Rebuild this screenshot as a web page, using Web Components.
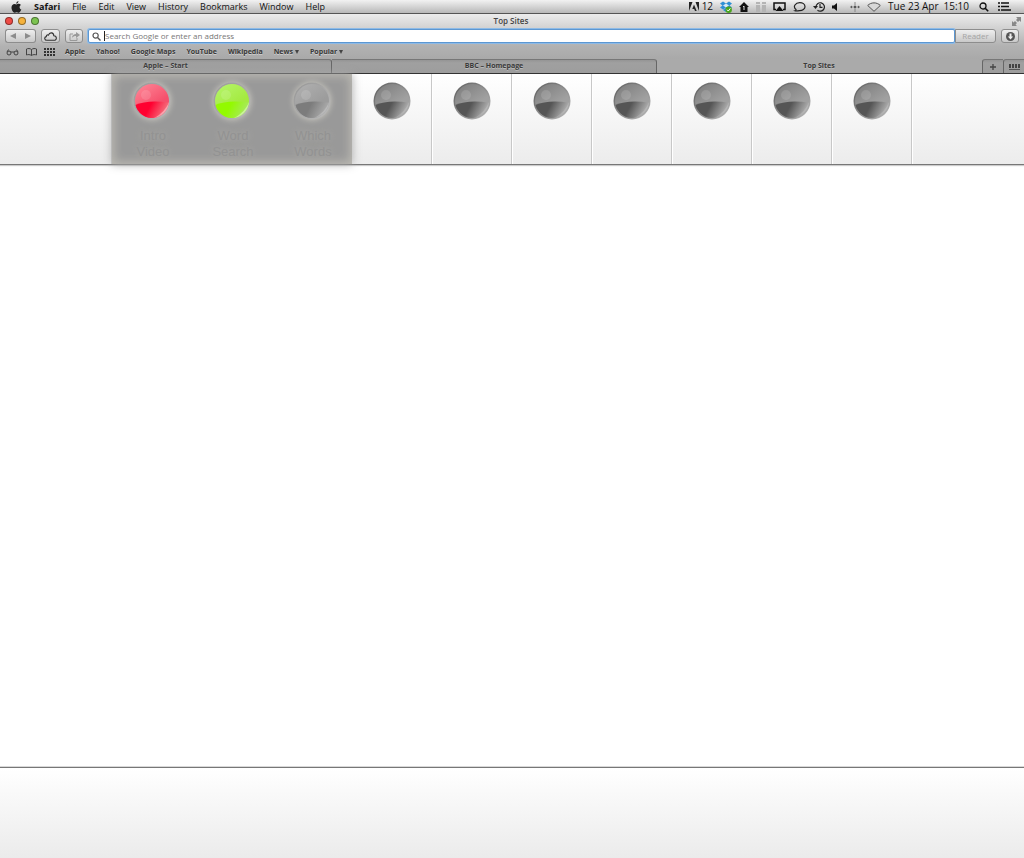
<!DOCTYPE html>
<html lang="en">
<head>
<meta charset="utf-8">
<title>Top Sites</title>
<style>
  html, body { margin: 0; background: #fff; }
  body { font-family: "Open Sans", "Noto Sans", sans-serif; color: #222; }
</style>
</head>
<body>
<browser-desktop></browser-desktop>

<template id="desktop-t">
<style>
  :host { display: flex; flex-direction: column; min-height: 100vh; overflow: hidden; }
  main { flex: 1; }
  footer { height: 90px; border-top: 1px solid #777; box-shadow: 0 -1px 0 #d8d8d8; background: linear-gradient(#fff, #ebebeb); }
</style>
<system-menu></system-menu>
<window-chrome></window-chrome>
<tab-strip></tab-strip>
<step-bar>
  <step-tile tone="red" lit>Intro<br>Video</step-tile>
  <step-tile tone="green" lit>Word<br>Search</step-tile>
  <step-tile tone="gray" lit>Which<br>Words</step-tile>
  <step-tile tone="dark"></step-tile>
  <step-tile tone="dark"></step-tile>
  <step-tile tone="dark"></step-tile>
  <step-tile tone="dark"></step-tile>
  <step-tile tone="dark"></step-tile>
  <step-tile tone="dark"></step-tile>
  <step-tile tone="dark"></step-tile>
</step-bar>
<main></main>
<footer></footer>
</template>

<template id="menu-t">
<style>
  :host { display: flex; justify-content: space-between; align-items: center; height: 13px; box-sizing: content-box; border-bottom: 1px solid #555; background: linear-gradient(#f2f2f2, #b8b8b8); font-size: 9px; line-height: 13px; font-weight: 500; color: #111; white-space: nowrap; }
  nav, div { display: flex; align-items: center; }
  nav { gap: 12px; padding-left: 11px; }
  div { padding-right: 13px; }
  svg { display: block; }
  b { font-weight: 700; }
  .status { gap: 7px; }
  .clock { display: flex; gap: 5px; font-size: 10px; }
  .count { margin-left: -4px; font-size: 10px; }
</style>
<nav>
  <svg width="11" height="12" viewBox="0 0 11 12"><path fill="#222" d="M7.4 0C7.5 1.4 6.5 2.6 5.3 2.7 5.2 1.5 6.2.3 7.4 0zM5.5 3.4c.5 0 1.2-.6 2.2-.6.9 0 1.7.4 2.2 1.1C8 5.100 8.300 7.600 10.300 8.400 9.600 10.200 8.600 11.700 7.600 11.700 6.800 11.700 6.500 11.200 5.600 11.200s-1.200.5-2 .5C2.200 11.700.500 8.900.500 6.500.500 4.100 2 2.900 3.500 2.900c.9 0 1.500.5 2 .5z"/></svg>
  <b>Safari</b><span>File</span><span>Edit</span><span>View</span><span>History</span><span>Bookmarks</span><span>Window</span><span>Help</span>
</nav>
<div class="status">
  <svg width="10" height="9" viewBox="0 0 10 9"><path fill="#222" d="M0 0h3.500L0 9zM6.500 0H10v9zM5 2.500 7.700 9H6L5.200 7H3.300z"/></svg>
  <span class="count">12</span>
  <svg width="12" height="12" viewBox="0 0 12 12"><path fill="#2d8fd5" d="m3 .5 3 2 3-2 3 2-2.500 2L12 6.500 9 8.500 6 6.500 3 8.500 0 6.500l2.500-2L0 2.500zM3 9l3-2 3 2-3 2z"/><path d="m3 4.500 3-2 3 2-3 2z" fill="#d9e9f5"/><circle cx="8.700" cy="8.700" r="3.200" fill="#4aa51d"/><path d="m7 8.700 1.300 1.300 2-2.600" fill="none" stroke="#fff"/></svg>
  <svg width="10" height="10" viewBox="0 0 10 10"><path fill="#111" d="M5 0 10 5H8.500v5h-7V5H0z"/><path d="M5 4v4M4 5l1-1" stroke="#ddd" fill="none"/></svg>
  <svg width="10" height="10" viewBox="0 0 10 10"><g fill="#b4b4b4"><path d="M0 0h4v2H0zM0 3h4v7H0zM6 0h4v2H6zM6 3h4v7H6z"/></g></svg>
  <svg width="13" height="10" viewBox="0 0 13 10"><path d="M3 7.500H1V1h11v6.500h-2" fill="none" stroke="#111" stroke-width="1.500"/><path d="m6.500 4 4 5h-8z" fill="#111"/></svg>
  <svg width="13" height="10" viewBox="0 0 13 10"><path d="M2 8.800C3 8.500 3.200 8 3 7.500 -.5 4.500 2.500.700 6.700.700c3 0 5.300 1.700 5.300 4S9.500 8.800 6.500 8.700C5 8.700 3.500 9.300 2 8.800z" fill="none" stroke="#222" stroke-width="1.200"/></svg>
  <svg width="12" height="10" viewBox="0 0 12 10"><path d="M3 5a4.200 4.200 0 1 1 1.500 3.200M7 2v3.300h2.500" fill="none" stroke="#222" stroke-width="1.200"/><path d="M0 4h5L2.500 7z" fill="#222"/></svg>
  <svg width="11" height="8" viewBox="0 0 11 8"><path d="M0 2.500h2L5 0v8L2 5.500H0z" fill="#111"/></svg>
  <svg width="10" height="10" viewBox="0 0 10 10"><path d="M5 0v10M0 5h10" stroke="#888"/><path d="M2 3.500.5 5 2 6.500zM8 3.500 9.500 5 8 6.500zM4 4h2v2H4z" fill="#555"/></svg>
  <svg width="14" height="10" viewBox="0 0 14 10"><path d="M.7 3.500C4 0 10 0 13.300 3.500L7 9.300z" fill="#d8d8d8" stroke="#555"/></svg>
  <span class="clock"><span>Tue 23 Apr</span><span>15:10</span></span>
  <svg style="margin-left:3px" width="10" height="10" viewBox="0 0 10 10"><circle cx="4" cy="4" r="3" fill="none" stroke="#111" stroke-width="1.300"/><path d="m6.200 6.200 3 3" stroke="#111" stroke-width="1.600"/></svg>
  <svg style="margin-left:2px" width="13" height="9" viewBox="0 0 13 9"><path d="M0 1h2M3 1h8M0 4.500h2M3 4.500h8M0 8h2M3 8h10" stroke="#111" stroke-width="1.700"/></svg>
</div>
</template>

<template id="chrome-t">
<style>
  :host { display: block; background: linear-gradient(#ececec, #d2d2d2 14px, #b2b2b2 32px, #a9a9a9); }
  .title { display: grid; grid-template-columns: 1fr auto 1fr; align-items: center; height: 14px; padding: 0 3px 0 5px; font-size: 8px; line-height: 14px; font-weight: 600; color: #444; }
  .title > span + span { padding-right: 4px; }
  .lights { display: flex; gap: 5px; }
  .lights i { width: 8px; height: 8px; border-radius: 50%; box-sizing: border-box; border: 1px solid #0006; }
  .title svg { justify-self: end; }
  .tools { display: flex; align-items: center; height: 16px; padding: 0 5px; }
  svg { display: block; }
  button { font: inherit; padding: 0; box-sizing: border-box; height: 14px; display: flex; align-items: center; justify-content: center; border: 1px solid #8d8d8d; border-radius: 3px; background: linear-gradient(#eee, #c9c9c9); color: #a4a4a4; font-size: 8px; line-height: 12px; }
  .back { width: 16px; border-radius: 3px 0 0 3px; border-right-color: #bbb; }
  .fwd { width: 16px; margin-left: -1px; border-radius: 0 3px 3px 0; border-left: 0; }
  .cloud { width: 19px; margin-left: 5px; }
  .share { width: 18px; margin-left: 5px; }
  label { flex: 1; min-width: 0; display: flex; align-items: center; gap: 3px; height: 12px; margin-left: 5px; padding-left: 3px; border: 1px solid #5c97d2; border-radius: 2px; background: #fff; box-shadow: 0 0 0 1px #8dbae6; }
  input { flex: 1; min-width: 0; height: 10px; padding: 0; border: 0; border-left: 1px solid #222; outline: 0; background: none; font: 8px/10px "Open Sans", sans-serif; color: #333; }
  input::placeholder { color: #777; opacity: 1; }
  .reader { width: 41px; border-radius: 0 3px 3px 0; }
  .down { width: 18px; margin-left: 5px; }
  nav { display: flex; align-items: center; gap: 11px; height: 15px; padding-left: 6px; font-size: 7px; line-height: 14px; font-weight: 700; white-space: nowrap; }
  a { color: #393939; text-decoration: none; text-shadow: 0 1px 0 #ccc; }
  a.more { display: flex; align-items: center; gap: 2px; }
  a.more::after { content: ""; border: 2px solid transparent; border-top: 4px solid #444; border-bottom: 0; }
  .icons { display: flex; gap: 7px; margin-right: -1px; }
</style>
<div class="title">
  <span class="lights"><i style="background:#ee4b45"></i><i style="background:#f5b23c"></i><i style="background:#7cc350"></i></span>
  <span>Top Sites</span>
  <svg width="9" height="9" viewBox="0 0 9 9"><path d="M4 0h5v5L7.500 3.500 6 5 4 3l1.500-1.500zM0 4l1.500 1.500L3 4l2 2-1.500 1.500L5 9H0z" fill="#888"/></svg>
</div>
<div class="tools">
  <button class="back" aria-label="Back"><svg width="6" height="6" viewBox="0 0 6 6"><path d="M6 0v6L0 3z" fill="#8c8c8c"/></svg></button>
  <button class="fwd" aria-label="Forward"><svg width="6" height="6" viewBox="0 0 6 6"><path d="M0 0v6l6-3z" fill="#8c8c8c"/></svg></button>
  <button class="cloud" aria-label="iCloud tabs"><svg width="13" height="9" viewBox="0 0 13 9"><path d="M3 8.300C.2 8.300 0 5 2.300 4.600 2.300 3 3.800 2.600 4.500 3.100 5.500-.2 9.700.300 9.800 3.700c3.300.2 3.400 4.600.2 4.600z" fill="none" stroke="#333" stroke-width="1.100"/></svg></button>
  <button class="share" aria-label="Share"><svg width="11" height="9" viewBox="0 0 11 9"><path d="M4 2H1v6.500h7V6" fill="none" stroke="#999"/><path d="M3 6c0-3 2-4 4-4V0l4 3-4 3V4C5.500 4 4 4.500 3 6z" fill="#999"/></svg></button>
  <label>
    <svg width="9" height="9" viewBox="0 0 9 9"><circle cx="3.600" cy="3.600" r="2.600" fill="none" stroke="#555" stroke-width="1.200"/><path d="m5.500 5.500 3 3" stroke="#555" stroke-width="1.400"/></svg>
    <input type="text" aria-label="Address" placeholder="Search Google or enter an address">
  </label>
  <button class="reader">Reader</button>
  <button class="down" aria-label="Downloads"><svg width="9" height="9" viewBox="0 0 9 9"><circle cx="4.500" cy="4.500" r="4.500" fill="#555"/><path d="M3.500 1.500h2v3h1.700L4.500 7.500 1.800 4.500h1.700z" fill="#eee"/></svg></button>
</div>
<nav>
  <span class="icons">
    <svg width="13" height="8" viewBox="0 0 13 8"><path d="M1 4 2.500 1.500M12 4l-1.500-2.500M1 4h11" stroke="#444" fill="none"/><circle cx="3" cy="5" r="2" fill="#aaa" stroke="#444"/><circle cx="10" cy="5" r="2" fill="#aaa" stroke="#444"/></svg>
    <svg width="11" height="8" viewBox="0 0 11 8"><path d="M5.500 1.500C4 .3 2 .3.500 1v6c1.500-.6 3.500-.6 5 .5 1.500-1.100 3.500-1.100 5-.5V1C9 .3 7 .3 5.500 1.500v6" fill="none" stroke="#444"/></svg>
    <svg width="11" height="8" viewBox="0 0 11 8"><path d="M0 1h11M0 4h11M0 7h11" stroke="#333" stroke-width="2" stroke-dasharray="2 1"/></svg>
  </span>
  <a href="#">Apple</a><a href="#">Yahoo!</a><a href="#">Google Maps</a><a href="#">YouTube</a><a href="#">Wikipedia</a><a href="#" class="more">News</a><a href="#" class="more">Popular</a>
</nav>
</template>

<template id="tabs-t">
<style>
  :host { display: grid; grid-template-columns: 332fr 325fr 325fr 21px 21px; height: 14px; border-bottom: 1px solid #333; background: #a8a8a8; font-size: 7px; line-height: 12px; font-weight: 700; }
  button { font: inherit; color: #3a3a3a; padding: 0; margin: 0; border: 0; box-sizing: border-box; background: linear-gradient(#959595, #a0a0a0 3px, #9d9d9d); border-top: 1px solid #777; border-right: 1px solid #666; text-shadow: 0 1px 0 #bbb; display: flex; align-items: center; justify-content: center; }
  .tab { border-radius: 0 3px 0 0; padding-bottom: 1px; }
  .tab:first-child { padding-left: 5px; }
  .active { background: #aaa; border-color: transparent; }
  .add, .all { border-left: 1px solid #666; border-right: 0; border-radius: 3px 0 0 0; }
  svg { display: block; }
</style>
<button class="tab">Apple – Start</button>
<button class="tab">BBC – Homepage</button>
<button class="tab active">Top Sites</button>
<button class="add" aria-label="New tab"><svg width="6" height="6" viewBox="0 0 6 6"><path d="M3 0v6M0 3h6" stroke="#444" stroke-width="1.300"/></svg></button>
<button class="all" aria-label="Show all tabs"><svg width="11" height="6" viewBox="0 0 11 6"><path d="M0 2h11" stroke="#444" stroke-width="4" stroke-dasharray="2 1"/><path d="M0 5.500h11" stroke="#555"/></svg></button>
</template>

<template id="bar-t">
<style>
  :host { display: block; background: linear-gradient(#fff, #ececec); border-bottom: 1px solid #777; box-shadow: 0 1px 1px #ccc; }
  .row { display: flex; max-width: 800px; height: 90px; margin: 0 auto; position: relative; box-shadow: -1px 0 0 #c8c8c8; }
  .glow { position: absolute; top: 0; bottom: 0; left: 0; width: 30%; background: #999; box-shadow: inset 0 0 10px 2px #bcbab3, 0 0 9px #aaa; }
  ::slotted(*) { flex: 1 1 0; min-width: 0; }
</style>
<div class="row"><div class="glow"></div><slot></slot></div>
</template>

<template id="tile-t">
<style>
  :host { display: block; position: relative; box-sizing: border-box; border-right: 1px solid #c8c8c8; box-shadow: 1px 0 0 #fff; text-align: center; }
  :host([lit]) { border-right-color: transparent; box-shadow: none; }
  svg { display: block; margin: 8px auto 0; overflow: visible; }
  :host([lit]) svg { filter: drop-shadow(0 0 3px #cfcdc4); }
  p { margin: 8px 0 0; padding-left: 3px; font: 13px/16px "Liberation Sans", Arial, sans-serif; color: #929292; text-shadow: 0 0 6px #b0afa9; }
</style>
<svg width="38" height="38" viewBox="0 0 38 38" aria-hidden="true">
  <defs>
    <linearGradient id="rim" x1="0" y1="0" x2="1" y2="1"><stop class="r1" offset="0"/><stop class="r2" offset="1"/></linearGradient>
    <linearGradient id="top" x1=".2" y1="0" x2=".6" y2=".6"><stop class="t1" offset="0"/><stop class="t2" offset="1"/></linearGradient>
    <linearGradient id="low" gradientUnits="userSpaceOnUse" x1="10" y1="22" x2="31" y2="33"><stop class="b1" offset="0"/><stop class="b1" offset=".3"/><stop class="b2" offset="1"/></linearGradient>
    <clipPath id="c"><circle cx="19" cy="19" r="17"/></clipPath>
  </defs>
  <circle cx="19" cy="19" r="18.500" fill="url(#rim)"/>
  <g clip-path="url(#c)">
    <path d="M0 0h38v38H0z" fill="url(#top)"/>
    <path d="M0 24Q14 17 38 21V38H0z" fill="url(#low)"/>
    <path d="M38 14C35 25 30 32 17 38h21z" class="edge" fill="#fff"/>
  </g>
  <circle cx="13" cy="13" r="5" fill="#fff" opacity=".13"/>
</svg>
<p><slot></slot></p>
</template>

<script>
  class TemplateElement extends HTMLElement {
    constructor() {
      super();
      const source = document.getElementById(this.constructor.templateId);
      this.attachShadow({ mode: "open" }).append(source.content.cloneNode(true));
    }
  }

  class StepTile extends TemplateElement {
    static templateId = "tile-t";
    connectedCallback() {
      // rim start/end, upper half start/end, lower half start/end, edge opacity
      const tones = {
        red: ["#999999", "#b8b8b8", "#ff8797", "#f5506c", "#ff0030", "#f4737f", 0.4],
        green: ["#999999", "#b8b8b8", "#b5f56a", "#a4ea40", "#93fa00", "#a8e860", 0.4],
        gray: ["#959595", "#bcbcbc", "#b0b0b0", "#9c9c9c", "#7c7c7c", "#acacac", 0.2],
        dark: ["#5c5c5c", "#bbbbbb", "#7c7c7c", "#a0a0a0", "#555555", "#b0b0b0", 0.15]
      };
      const t = tones[this.getAttribute("tone")] || tones.dark;
      ["r1", "r2", "t1", "t2"].forEach((name, i) => {
        this.shadowRoot.querySelector("." + name).setAttribute("stop-color", t[i]);
      });
      this.shadowRoot.querySelectorAll(".b1").forEach(s => s.setAttribute("stop-color", t[4]));
      this.shadowRoot.querySelector(".b2").setAttribute("stop-color", t[5]);
      this.shadowRoot.querySelector(".edge").setAttribute("opacity", t[6]);
    }
  }

  customElements.define("system-menu", class extends TemplateElement { static templateId = "menu-t"; });
  customElements.define("window-chrome", class extends TemplateElement { static templateId = "chrome-t"; });
  customElements.define("tab-strip", class extends TemplateElement { static templateId = "tabs-t"; });
  customElements.define("step-bar", class extends TemplateElement { static templateId = "bar-t"; });
  customElements.define("step-tile", StepTile);
  customElements.define("browser-desktop", class extends TemplateElement { static templateId = "desktop-t"; });
</script>
</body>
</html>
